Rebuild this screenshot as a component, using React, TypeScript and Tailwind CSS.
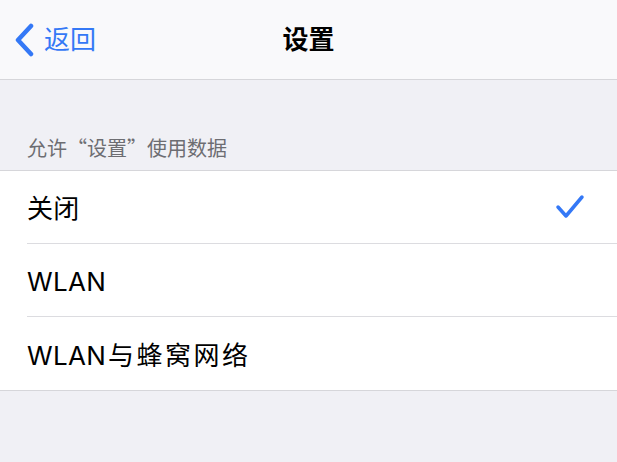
export default function App() {
  const rows = [
    { label: "关闭", extra: "", checked: true },
    { label: "WLAN", extra: "", checked: false },
    { label: "WLAN", extra: "与蜂窝网络", checked: false },
  ];

  return (
    <div
      className="w-[617px] h-[462px] bg-[#f0f0f5] overflow-hidden"
      style={{ fontFamily: 'Inter, "Noto Sans CJK SC", "Noto Sans", sans-serif' }}
    >
      {/* Nav bar */}
      <div className="relative h-[80px] bg-[#f9f9fb] border-b border-[#d6d6da] flex items-center justify-center">
        <div className="absolute left-[14px] top-0 h-full flex items-center gap-[8px] text-[#3478f6]">
          <svg width="22" height="34" viewBox="0 0 22 34" fill="none">
            <path d="M17 3 L4 17 L17 31" stroke="#3478f6" strokeWidth="4.5" strokeLinecap="round" strokeLinejoin="round" />
          </svg>
          <span className="text-[26px] leading-none">返回</span>
        </div>
        <span className="text-[26px] font-bold text-black leading-none">设置</span>
      </div>

      {/* Section header */}
      <div className="h-[90px] flex items-end pb-[12px] pl-[27px]">
        <span
          className="text-[20px] text-[#6d6d72] leading-none"
          style={{ fontFamily: '"Noto Sans CJK SC", sans-serif' }}
        >
          允许“设置”使用数据
        </span>
      </div>

      {/* List */}
      <div className="bg-white border-y border-[#d6d6da]">
        {rows.map((r, i) => (
          <div key={i} className="pl-[27px]">
            <div
              className={`h-[73px] flex items-center justify-between pr-[32px] ${
                i < rows.length - 1 ? "border-b border-[#dcdce0]" : ""
              }`}
            >
              <span className="text-[26px] text-black leading-none tracking-[0.3px] pt-[4px]">
                {r.label}
                {r.extra && <span className="ml-[2px] tracking-[2.5px]">{r.extra}</span>}
              </span>
              {r.checked && (
                <svg width="30" height="26" viewBox="0 0 30 26" fill="none">
                  <path d="M3 13 L11 22 L27 3" stroke="#3478f6" strokeWidth="3.5" strokeLinecap="round" strokeLinejoin="round" />
                </svg>
              )}
            </div>
          </div>
        ))}
      </div>
    </div>
  );
}
